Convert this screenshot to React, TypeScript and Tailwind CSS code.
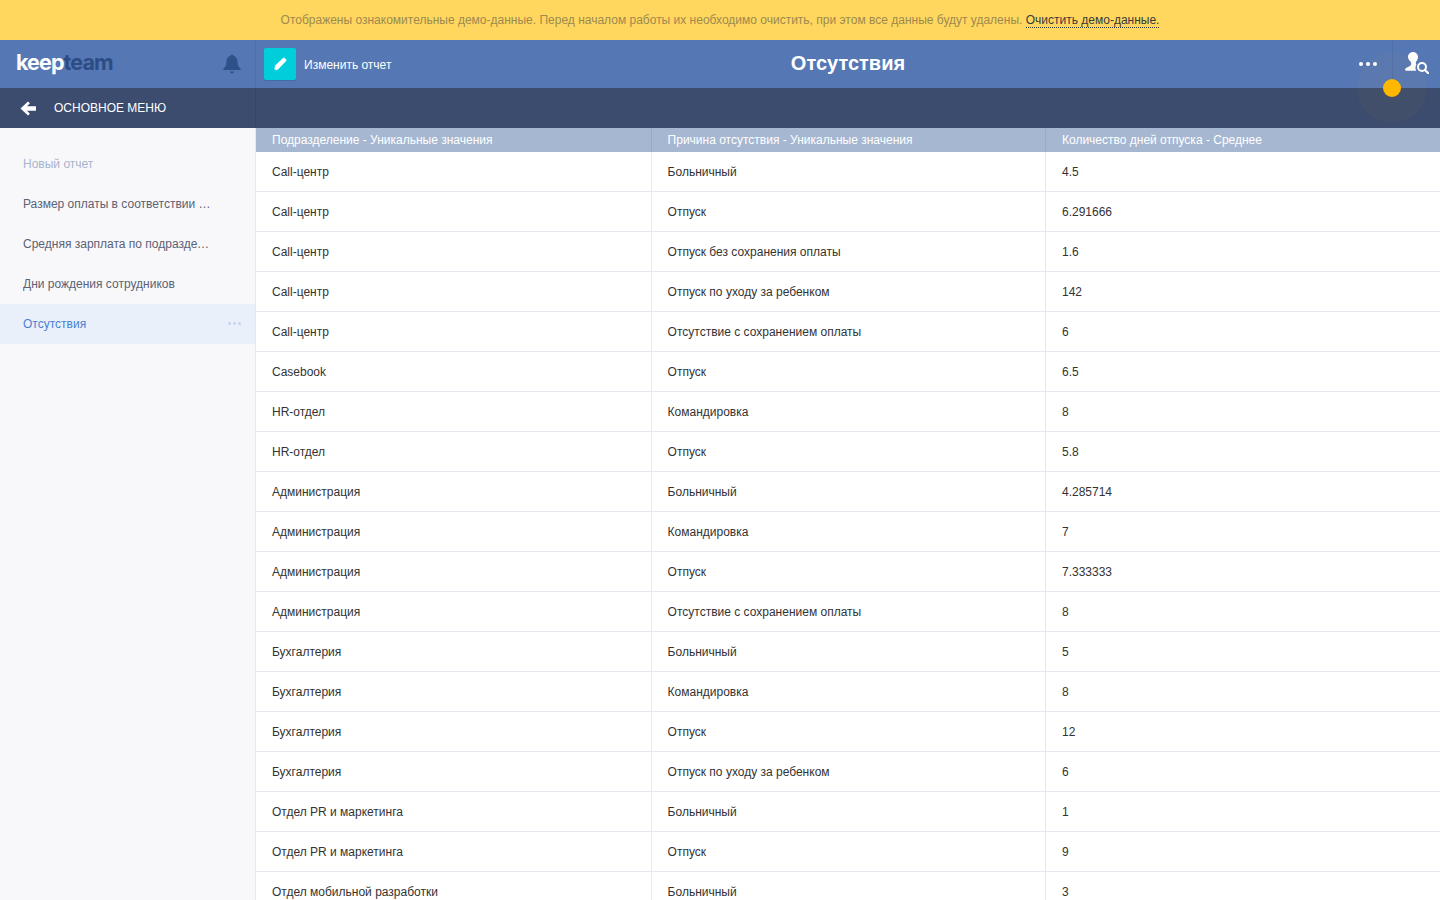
const rows: [string, string, string][] = [
  ["Call-центр", "Больничный", "4.5"],
  ["Call-центр", "Отпуск", "6.291666"],
  ["Call-центр", "Отпуск без сохранения оплаты", "1.6"],
  ["Call-центр", "Отпуск по уходу за ребенком", "142"],
  ["Call-центр", "Отсутствие с сохранением оплаты", "6"],
  ["Casebook", "Отпуск", "6.5"],
  ["HR-отдел", "Командировка", "8"],
  ["HR-отдел", "Отпуск", "5.8"],
  ["Администрация", "Больничный", "4.285714"],
  ["Администрация", "Командировка", "7"],
  ["Администрация", "Отпуск", "7.333333"],
  ["Администрация", "Отсутствие с сохранением оплаты", "8"],
  ["Бухгалтерия", "Больничный", "5"],
  ["Бухгалтерия", "Командировка", "8"],
  ["Бухгалтерия", "Отпуск", "12"],
  ["Бухгалтерия", "Отпуск по уходу за ребенком", "6"],
  ["Отдел PR и маркетинга", "Больничный", "1"],
  ["Отдел PR и маркетинга", "Отпуск", "9"],
  ["Отдел мобильной разработки", "Больничный", "3"],
];

const menu = ["Размер оплаты в соответствии с грейдом сотрудника", "Средняя зарплата по подразделениям", "Дни рождения сотрудников"];

export default function App() {
  return (
    <div className="relative h-[900px] w-[1440px] overflow-hidden bg-white font-['Liberation_Sans',sans-serif] text-xs">
      <div className="flex h-10 items-center justify-center bg-[#ffd75e] text-[#9c8a50]">
        <span>
          Отображены ознакомительные демо-данные. Перед началом работы их необходимо очистить, при этом все данные будут удалены.{" "}
          <span className="border-b border-dotted border-[#3a3a3a] text-[#3a3a3a]">Очистить демо-данные.</span>
        </span>
      </div>

      <div className="flex h-12 bg-[#5578b5]">
        <div className="flex w-[256px] items-center justify-between border-r border-[#4d6ea8] pb-[2px] pl-4 pr-[14px]">
          <div className="font-['Inter',sans-serif] text-[21.5px] font-bold leading-none tracking-[-0.9px]">
            <span className="text-white">keep</span>
            <span className="text-[#2d4c84]">team</span>
          </div>
          <svg width="18" height="20" viewBox="0 0 18 20" fill="#2f5189" className="mt-[2px]">
            <path d="M9 0.500c1 0 1.600.7 1.600 1.600 2.800.7 4 3 4 6 0 3.400 1 5 3 6.500v1.400H.4v-1.400c2-1.500 3-3.100 3-6.500 0-3 1.200-5.300 4-6Q7.400.5 9 .5z" />
            <path d="M6.800 17.500h4.400c-.3 1.200-1.100 2-2.200 2s-1.900-.8-2.200-2z" />
          </svg>
        </div>
        <div className="grid flex-1 grid-cols-[1fr_auto_1fr] items-center">
          <div className="flex items-center pl-2">
            <div className="flex h-8 w-8 items-center justify-center rounded-[2px] bg-[#00cedb] shadow-[0_1px_0_#3f6ea0]">
              <svg width="14" height="14" viewBox="0 0 14 14" fill="white">
                <path d="M9 2 10 1q.8-.7 1.600 0l1.500 1.500q.7.8 0 1.600L5 12.500 2.800 13.200 2 12l-1 1 .8-2.200 0-2z" />
              </svg>
            </div>
            <span className="ml-2 mt-[2px] text-white">Изменить отчет</span>
          </div>
          <div className="pb-[2px] text-center text-xl font-bold leading-none text-white">Отсутствия</div>
          <div className="flex h-12 items-center justify-end">
            <div className="mr-[15px] flex gap-[3px]">
              <span className="h-1 w-1 rounded-full bg-white" />
              <span className="h-1 w-1 rounded-full bg-white" />
              <span className="h-1 w-1 rounded-full bg-white" />
            </div>
            <div className="h-12 w-px bg-[#4d6ea8]" />
            <svg className="ml-3 mr-[11px] mb-[3px]" width="24" height="22" viewBox="0 0 24 22">
              <path fill="white" d="M8 0c2.800 0 5 2.200 5 5 0 1.800-.9 3.400-1.800 4.600-.6.900-.4 2.100.2 2.900-1.200 1.500-1.300 4.200-.2 6.200H1.200C-.2 18.700-.4 16.700 1 16c2-1 4.400-1.500 5-3.200.4-1.100.2-2.300-.6-3.300C4.200 8.300 3 6.800 3 5 3 2.200 5.200 0 8 0z" />
              <circle cx="17" cy="15" r="4" fill="none" stroke="white" strokeWidth="2" />
              <path d="M20 18l3 3" stroke="white" strokeWidth="2.200" strokeLinecap="round" />
            </svg>
          </div>
        </div>
      </div>

      <div className="flex h-10 bg-[#3c4c6e]">
        <div className="flex w-[256px] items-center border-r border-[#364665] pl-5 text-white">
          <svg width="16" height="15" viewBox="0 0 17 16" fill="white">
            <path d="M8.500 0.500 10.500 2.500 7.500 5.500H17V10.500H7.500L10.500 13.500 8.500 15.500.5 8z" />
          </svg>
          <span className="ml-[18px]">ОСНОВНОЕ МЕНЮ</span>
        </div>
      </div>

      <div className="flex">
        <div className="h-[772px] w-[256px] shrink-0 border-r border-[#e6e8f0] bg-[#f8f8fb]">
          <div className="pt-4">
            <div className="flex h-10 items-center pl-[23px] text-[#a8b4cc]">Новый отчет</div>
            {menu.map((m) => (
              <div key={m} className="flex h-10 items-center pl-[23px] pr-11 text-[#5a6274]">
                <span className="truncate">{m}</span>
              </div>
            ))}
            <div className="flex h-10 items-center justify-between bg-[#e9f0fa] pl-[23px] pr-[14px] text-[#4a80d4]">
              <span>Отсутствия</span>
              <div className="mb-[2px] flex gap-[2px]">
                <span className="h-[3px] w-[3px] rounded-full bg-[#c3d5f0]" />
                <span className="h-[3px] w-[3px] rounded-full bg-[#c3d5f0]" />
                <span className="h-[3px] w-[3px] rounded-full bg-[#c3d5f0]" />
              </div>
            </div>
          </div>
        </div>

        <div className="flex-1">
          <div className="grid h-6 grid-cols-[395.6px_394.4px_1fr] items-center bg-[#a6b7d2] text-white">
            <div className="border-r border-[#98aac8] pl-4 leading-6">Подразделение - Уникальные значения</div>
            <div className="border-r border-[#98aac8] pl-4 leading-6">Причина отсутствия - Уникальные значения</div>
            <div className="pl-4 leading-6">Количество дней отпуска - Среднее</div>
          </div>
          {rows.map((r, i) => (
            <div key={i} className="grid h-10 grid-cols-[395.6px_394.4px_1fr] border-b border-[#e6e8f0] text-[#333333]">
              <div className="flex items-center border-r border-[#e6e8f0] pl-4">{r[0]}</div>
              <div className="flex items-center border-r border-[#e6e8f0] pl-4">{r[1]}</div>
              <div className="flex items-center pl-4">{r[2]}</div>
            </div>
          ))}
        </div>
      </div>

      <div className="absolute left-[1357px] top-[53px] h-[70px] w-[70px] rounded-full bg-[#ffb700]/[0.035]" />
      <div className="absolute left-[1383px] top-[79px] h-[18px] w-[18px] rounded-full bg-[#ffb700]" />
    </div>
  );
}
